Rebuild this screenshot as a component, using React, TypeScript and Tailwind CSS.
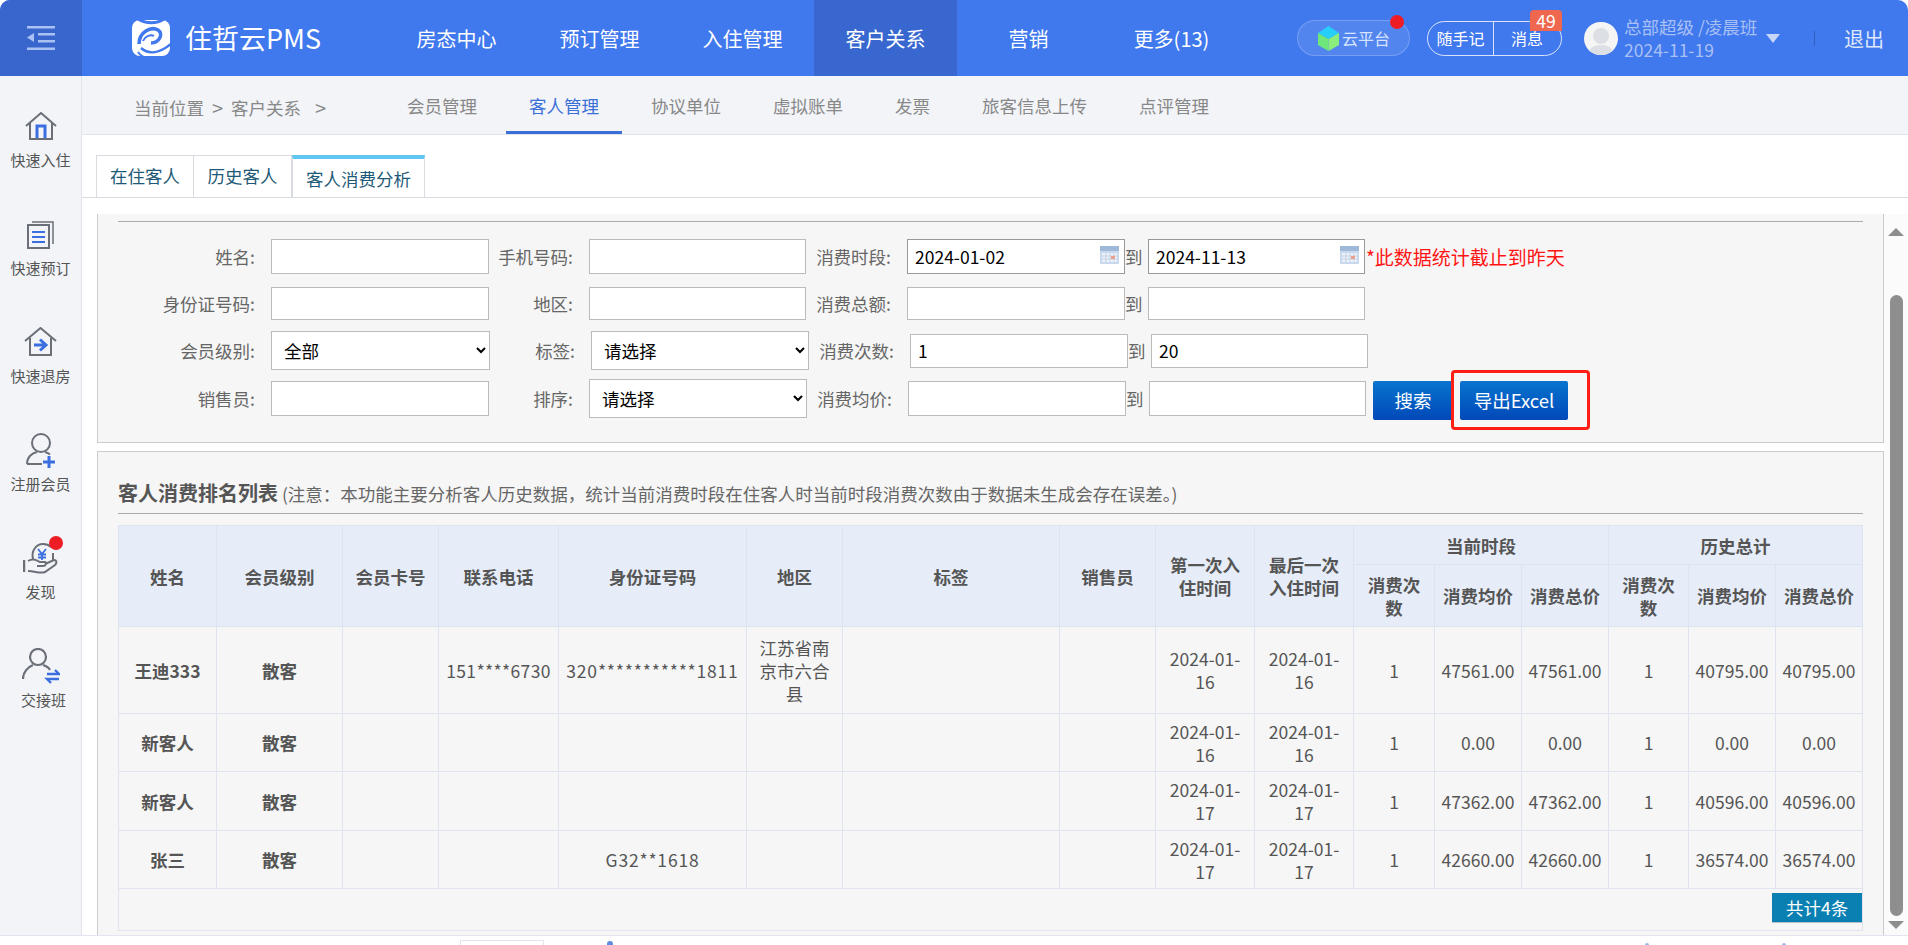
import type { ReactNode } from 'react'

const navItems = ['房态中心', '预订管理', '入住管理', '客户关系', '营销', '更多(13)']
const subNav = ['会员管理', '客人管理', '协议单位', '虚拟账单', '发票', '旅客信息上传', '点评管理']
const colWidths = ['w-[98px]', 'w-[126px]', 'w-[96px]', 'w-[120px]', 'w-[188px]', 'w-[96px]', 'w-[217px]', 'w-[96px]', 'w-[99px]', 'w-[99px]', 'w-[81px]', 'w-[87px]', 'w-[87px]', 'w-[80px]', 'w-[87px]', 'w-[87px]']

const rows = [
  { h: 'h-[87px]', name: '王迪333', phone: '151****6730', id: '320***********1811', area: '江苏省南京市六合县', first: '2024-01-16', last: '2024-01-16', cur: ['47561.00', '47561.00'], his: ['40795.00', '40795.00'] },
  { h: 'h-[58px]', name: '新客人', phone: '', id: '', area: '', first: '2024-01-16', last: '2024-01-16', cur: ['0.00', '0.00'], his: ['0.00', '0.00'] },
  { h: 'h-[59px]', name: '新客人', phone: '', id: '', area: '', first: '2024-01-17', last: '2024-01-17', cur: ['47362.00', '47362.00'], his: ['40596.00', '40596.00'] },
  { h: 'h-[58px]', name: '张三', phone: '', id: 'G32**1618', area: '', first: '2024-01-17', last: '2024-01-17', cur: ['42660.00', '42660.00'], his: ['36574.00', '36574.00'] },
]

const grey = '#6b7078'
const blue = '#3b6fe0'

const Logo = () => (
  <svg width="40" height="38" viewBox="0 0 40 38" fill="none">
    <rect x="1" y="1" width="38" height="36" rx="8" fill="#fff" />
    <path d="M7 0 C15 5 26 5 33 0" stroke="#4078ee" strokeWidth="3" />
    <path d="M8 25 C8 13 20 7 27 11 C33 15 28 24 20 24" stroke="#4078ee" strokeWidth="3.5" />
    <path d="M12 22 C14 17 20 15 23 17" stroke="#4078ee" strokeWidth="2" />
    <path d="M10 29 C18 36 29 34 40 25" stroke="#4078ee" strokeWidth="2.5" />
    <path d="M7 33 C11 39 18 40 24 39" stroke="#4078ee" strokeWidth="2" />
  </svg>
)

const HomeIcon = () => (
  <svg width="32" height="28" viewBox="0 0 32 28" fill="none" stroke={grey} strokeWidth="2">
    <path d="M1 14 L16 1 L31 14" />
    <path d="M5 11 V27 H27 V11" />
    <path d="M12 26 V14 H20 V26" stroke={blue} strokeWidth="3" />
  </svg>
)

const BookIcon = () => (
  <svg width="28" height="29" viewBox="0 0 28 29" fill="none" stroke={grey} strokeWidth="2">
    <rect x="1" y="5" width="21" height="23" />
    <path d="M5 2 H26 V24" strokeWidth="1.5" />
    <path d="M5 12 H18 M5 17 H18 M5 22 H18" stroke={blue} strokeWidth="2" />
  </svg>
)

const ExitIcon = () => (
  <svg width="33" height="30" viewBox="0 0 33 30" fill="none" stroke={grey} strokeWidth="2">
    <path d="M1 14 L16.5 1 L32 14" />
    <path d="M6 11 V28 H27 V11" />
    <path d="M10 18 H21 M16 12.5 L22 18 L16 23.5" stroke={blue} strokeWidth="3" />
  </svg>
)

const AddUserIcon = () => (
  <svg width="30" height="35" viewBox="0 0 30 35" fill="none" stroke={grey} strokeWidth="2">
    <circle cx="15" cy="10" r="9" />
    <path d="M1 31 C1 24 6 20 11 19 M19 19 C21 19.5 23 20.5 24 21.5 M1 31 H16" />
    <path d="M23 23 V35 M17 29 H29" stroke={blue} strokeWidth="3" />
  </svg>
)

const HandIcon = () => (
  <svg width="35" height="33" viewBox="0 0 35 33" fill="none" stroke={grey} strokeWidth="2">
    <path d="M10 17 C8 9 13 2 20 2 C23 2 26 3 28 5 M30 11 V19" />
    <path d="M1 18 V30" strokeWidth="2.5" />
    <path d="M5 19 C10 16 13 18 17 20 H22 C24 21 23 24 20 24 H14 M22 22 L31 18 C34 18 34 21 32 23 L22 30 C17 32 12 29 5 29" />
    <path d="M15 7 L19 12 L23 7 M19 12 V18 M15 12.5 H23 M15 15.5 H23" stroke={blue} strokeWidth="1.8" />
  </svg>
)

const SwapUserIcon = () => (
  <svg width="38" height="36" viewBox="0 0 38 36" fill="none" stroke={grey} strokeWidth="2.2">
    <circle cx="16" cy="9" r="8" />
    <path d="M1 31 C1 24 6 19 11 17 M21 17 C24 18 27 20 28 22" />
    <path d="M25 26 H37 L33 22 M37 31 H25 L29 35" stroke={blue} strokeWidth="2.4" />
  </svg>
)

const CalendarIcon = () => (
  <svg width="19" height="18" viewBox="0 0 19 18">
    <rect width="19" height="18" rx="1" fill="#c9d8ec" />
    <rect width="19" height="5" fill="#9db8d8" />
    <rect x="2" y="7" width="15" height="9" fill="#eef3fa" />
    <path d="M2 10 H17 M2 13 H17 M6 7 V16 M10 7 V16 M14 7 V16" stroke="#c3d0e2" strokeWidth="1" />
    <rect x="11" y="10" width="4" height="3" fill="#e9a08c" />
  </svg>
)

const inputCls = 'border border-[#bbb] bg-white px-[7px] text-black outline-none shrink-0'
const selectCls = 'h-[39px] shrink-0 border border-[#bbb] bg-white pl-[8px] text-black'
const btnCls = 'h-[39px] rounded-[2px] bg-gradient-to-b from-[#0b74cf] to-[#0448b8] text-[18.5px] text-white'

const Label = ({ w, children }: { w: string; children: ReactNode }) => (
  <span className={`${w} shrink-0 pr-[16px] text-right text-[#666]`}>{children}</span>
)

const To = () => <span className="w-[23px] shrink-0 text-[#666]">到</span>

const DateInput = ({ value, w }: { value: string; w: string }) => (
  <div className={`relative ${w} shrink-0`}>
    <input defaultValue={value} className="h-[35px] w-full border border-[#999] bg-white px-[7px] text-black outline-none" />
    <span className="absolute top-[7px] right-[6px] flex">
      <CalendarIcon />
    </span>
  </div>
)

const SideItem = ({ icon, label, dot, shift }: { icon: ReactNode; label: string; dot?: boolean; shift?: boolean }) => (
  <div className="flex h-[108px] flex-col items-center">
    <div className="relative mt-[6px] flex h-[40px] items-center justify-center">
      {icon}
      {dot && <span className="absolute top-[-2px] right-[-5px] h-[14px] w-[14px] rounded-full bg-[#ee1c25]" />}
    </div>
    <span className={`mt-[4px] text-[15px] leading-[20px] text-[#555] ${shift ? 'pl-[6px]' : ''}`}>{label}</span>
  </div>
)

const th = 'border border-[#dde4f1] bg-[#e6edf9] px-[6px] font-bold text-[#555]'
const td = 'border border-[#dfe4ee] px-[6px] text-center text-[#555]'
const tdTight = 'border border-[#dfe4ee] text-center text-[#555] whitespace-nowrap'

export default function App() {
  return (
    <div className="flex h-screen w-full flex-col overflow-hidden bg-white text-[17.5px] leading-[23px] [font-family:'Noto_Sans_CJK_SC',sans-serif]">
      {/* Header */}
      <header className="flex h-[76px] shrink-0 items-center rounded-t-[10px] bg-[#4078ee] text-white">
        <div className="flex h-full w-[82px] shrink-0 items-center justify-center rounded-tl-[10px] bg-[#3966cc]">
          <svg width="28" height="24" viewBox="0 0 28 24" fill="#a9c1f3">
            <rect x="0" y="0" width="28" height="2.5" />
            <rect x="11" y="7" width="17" height="2.5" />
            <rect x="11" y="14" width="17" height="2.5" />
            <rect x="0" y="21.5" width="28" height="2.5" />
            <path d="M0 11.5 L7 7 V16 Z" />
          </svg>
        </div>
        <div className="flex h-full w-[303px] shrink-0 items-center pl-[49px]">
          <Logo />
          <span className="ml-[14px] text-[27px] leading-[36px]">住哲云PMS</span>
        </div>
        <nav className="flex h-full shrink-0">
          {navItems.map((item) => (
            <div key={item} className={`flex h-full w-[143px] items-center justify-center text-[20px] ${item === '客户关系' ? 'bg-[#3868cf]' : ''}`}>
              {item}
            </div>
          ))}
        </nav>
        <div className="relative ml-[54px] flex h-[36px] w-[113px] shrink-0 items-center rounded-full border border-white/20 bg-white/10 pl-[20px]">
          <svg width="21" height="25" viewBox="0 0 21 25">
            <path d="M10.5 0 L21 7 L10.5 13 L0 7 Z" fill="#26cffa" />
            <path d="M0 7 L10.5 13 V25 L0 19 Z" fill="#6fe67a" />
            <path d="M21 7 L10.5 13 V25 L21 19 Z" fill="#8aee7e" />
          </svg>
          <span className="ml-[3px] text-[16px] text-[#d8e4ff]">云平台</span>
          <span className="absolute top-[-6px] right-[5px] h-[14px] w-[14px] rounded-full bg-[#ee1c25]" />
        </div>
        <div className="relative ml-[17px] flex h-[35px] w-[135px] shrink-0 items-center rounded-full border border-white/80 text-[16px]">
          <span className="flex h-full w-[66px] items-center justify-center border-r border-white/80">随手记</span>
          <span className="pl-[17px]">消息</span>
          <span className="absolute top-[-12px] right-[-1px] flex h-[21px] w-[32px] items-center justify-center rounded-t-[4px] bg-[#f0674f] text-[17.5px]">49</span>
        </div>
        <div className="ml-[22px] flex h-[33px] w-[34px] shrink-0 items-end justify-center overflow-hidden rounded-full bg-[#f5f5f5]">
          <svg width="26" height="28" viewBox="0 0 26 28" fill="#dcdfe3">
            <circle cx="13" cy="9" r="8" />
            <path d="M0 28 C1 20 7 18 13 18 C19 18 25 20 26 28 Z" />
          </svg>
        </div>
        <div className="ml-[6px] flex w-[133px] shrink-0 flex-col text-[#a9c0f5]">
          <span className="whitespace-nowrap">总部超级 /凌晨班</span>
          <span>2024-11-19</span>
        </div>
        <svg className="ml-[9px] shrink-0" width="14" height="9" viewBox="0 0 14 9" fill="#c8d6f8">
          <path d="M0 0 H14 L7 9 Z" />
        </svg>
        <span className="ml-[34px] h-[15px] w-px shrink-0 bg-[#345fbd]" />
        <span className="ml-[29px] text-[20px] text-[#dfe7fb]">退出</span>
      </header>

      <div className="flex min-h-0 flex-1">
        {/* Sidebar */}
        <aside className="w-[82px] shrink-0 border-r border-[#e2e4ea] bg-[#f2f4f8] pt-[24px]">
          <SideItem icon={<HomeIcon />} label="快速入住" />
          <SideItem icon={<BookIcon />} label="快速预订" />
          <SideItem icon={<ExitIcon />} label="快速退房" />
          <SideItem icon={<AddUserIcon />} label="注册会员" />
          <SideItem icon={<HandIcon />} label="发现" dot />
          <SideItem icon={<SwapUserIcon />} label="交接班" shift />
        </aside>

        <main className="flex min-w-0 flex-1 flex-col">
          {/* Sub navigation */}
          <div className="flex h-[59px] shrink-0 border-b border-[#e2e4e8] bg-[#f2f4f8]">
            <div className="flex w-[302px] shrink-0 items-center pt-[5px] pl-[52px] text-[#888]">
              当前位置
              <span className="mx-[8px] text-[20px]">&gt;</span>
              客户关系
              <span className="ml-[14px] text-[20px]">&gt;</span>
            </div>
            <div className="flex gap-[6px]">
              {subNav.map((item) => (
                <div
                  key={item}
                  className={`flex items-center border-b-[3px] px-[23px] pt-[3px] ${
                    item === '客人管理' ? 'border-[#3b6fd8] text-[#3b6fd8]' : 'border-transparent text-[#888]'
                  }`}
                >
                  {item}
                </div>
              ))}
            </div>
          </div>

          {/* Page tabs */}
          <div className="mt-[20px] flex h-[43px] shrink-0 border-b border-[#d8dce0] pl-[14px] text-[#1e5a78]">
            <div className="flex h-[43px] w-[98px] items-center justify-center border border-[#d8dce0] pb-[2px]">在住客人</div>
            <div className="flex h-[43px] w-[98px] items-center justify-center border-y border-r border-[#d8dce0] pb-[2px]">历史客人</div>
            <div className="flex h-[43px] w-[133px] items-center justify-center border-x border-b border-[#d8dce0] border-t-[4px] border-t-[#5fc6f2] bg-white">客人消费分析</div>
          </div>

          <div className="flex min-h-0 flex-1 pt-[16px]">
            <div className="min-w-0 flex-1 pl-[15px]">
              {/* Search form */}
              <section className="border-x border-b border-[#ccc] bg-[#f6f6f6] pt-[7px] pb-[24px] whitespace-nowrap">
                <div className="mx-[20px] mb-[15px] h-px bg-[#aaa]" />
                <div className="flex h-[39px] items-center">
                  <Label w="w-[173px]">姓名:</Label>
                  <input className={`${inputCls} h-[35px] w-[218px]`} />
                  <Label w="w-[100px]">手机号码:</Label>
                  <input className={`${inputCls} h-[35px] w-[217px]`} />
                  <Label w="w-[101px]">消费时段:</Label>
                  <DateInput value="2024-01-02" w="w-[218px]" />
                  <To />
                  <DateInput value="2024-11-13" w="w-[217px]" />
                  <span className="ml-[1px] text-[19px] text-[#ff1414]">*此数据统计截止到昨天</span>
                </div>
                <div className="mt-[8px] flex h-[39px] items-center">
                  <Label w="w-[173px]">身份证号码:</Label>
                  <input className={`${inputCls} h-[33px] w-[218px]`} />
                  <Label w="w-[100px]">地区:</Label>
                  <input className={`${inputCls} h-[33px] w-[217px]`} />
                  <Label w="w-[101px]">消费总额:</Label>
                  <input className={`${inputCls} h-[33px] w-[218px]`} />
                  <To />
                  <input className={`${inputCls} h-[33px] w-[217px]`} />
                </div>
                <div className="mt-[8px] flex h-[39px] items-center">
                  <Label w="w-[173px]">会员级别:</Label>
                  <select defaultValue="全部" className={`${selectCls} w-[219px]`}>
                    <option>全部</option>
                  </select>
                  <Label w="w-[101px]">标签:</Label>
                  <select defaultValue="请选择" className={`${selectCls} w-[218px]`}>
                    <option>请选择</option>
                  </select>
                  <Label w="w-[101px]">消费次数:</Label>
                  <input defaultValue="1" className={`${inputCls} h-[34px] w-[218px]`} />
                  <To />
                  <input defaultValue="20" className={`${inputCls} h-[34px] w-[217px]`} />
                </div>
                <div className="mt-[9px] flex h-[39px] items-center">
                  <Label w="w-[173px]">销售员:</Label>
                  <input className={`${inputCls} h-[35px] w-[218px]`} />
                  <Label w="w-[100px]">排序:</Label>
                  <select defaultValue="请选择" className={`${selectCls} w-[218px]`}>
                    <option>请选择</option>
                  </select>
                  <Label w="w-[101px]">消费均价:</Label>
                  <input className={`${inputCls} h-[35px] w-[218px]`} />
                  <To />
                  <input className={`${inputCls} h-[35px] w-[217px]`} />
                  <button className={`${btnCls} mt-[4px] ml-[7px] w-[80px] shrink-0`}>搜索</button>
                  <div className="relative mt-[4px] ml-[7px] shrink-0">
                    <button className={`${btnCls} w-[108px]`}>导出Excel</button>
                    <span className="absolute top-[-11px] right-[-22px] bottom-[-10px] left-[-9px] rounded-[4px] border-[3px] border-[#ff1f14]" />
                  </div>
                </div>
              </section>

              {/* Ranking list */}
              <section className="mt-[8px] h-[600px] border-x border-t border-[#ccc] bg-[#f6f6f6] px-[20px]">
                <div className="border-b border-[#aaa] pt-[29px] pb-[7px] leading-[24px] whitespace-nowrap text-[#666]">
                  <b className="text-[20px] text-[#555]">客人消费排名列表</b> (注意&#xFF1A;本功能主要分析客人历史数据&#xFF0C;统计当前消费时段在住客人时当前时段消费次数由于数据未生成会存在误差。)
                </div>
                <table className="mt-[11px] w-full table-fixed border-collapse">
                  <colgroup>
                    {colWidths.map((w, i) => (
                      <col key={i} className={w} />
                    ))}
                  </colgroup>
                  <thead>
                    <tr className="h-[39px]">
                      {['姓名', '会员级别', '会员卡号', '联系电话', '身份证号码', '地区', '标签', '销售员', '第一次入住时间', '最后一次入住时间'].map((h) => (
                        <th key={h} rowSpan={2} className={th}>{h}</th>
                      ))}
                      <th colSpan={3} className={th}>当前时段</th>
                      <th colSpan={3} className={th}>历史总计</th>
                    </tr>
                    <tr className="h-[62px]">
                      {['消费次数', '消费均价', '消费总价', '消费次数', '消费均价', '消费总价'].map((h, i) => (
                        <th key={i} className={th}>{h}</th>
                      ))}
                    </tr>
                  </thead>
                  <tbody>
                    {rows.map((r, i) => (
                      <tr key={i} className={r.h}>
                        <td className={`${td} font-bold`}>{r.name}</td>
                        <td className={`${td} font-bold`}>散客</td>
                        <td className={td}></td>
                        <td className={`${tdTight} tracking-[0.35px]`}>{r.phone}</td>
                        <td className={`${tdTight} tracking-[0.8px]`}>{r.id}</td>
                        <td className={td}>{r.area}</td>
                        <td className={td}></td>
                        <td className={td}></td>
                        <td className={td}>{r.first}</td>
                        <td className={td}>{r.last}</td>
                        <td className={td}>1</td>
                        <td className={tdTight}>{r.cur[0]}</td>
                        <td className={tdTight}>{r.cur[1]}</td>
                        <td className={td}>1</td>
                        <td className={tdTight}>{r.his[0]}</td>
                        <td className={tdTight}>{r.his[1]}</td>
                      </tr>
                    ))}
                    <tr className="h-[42px]">
                      <td colSpan={16} className="border border-[#dfe4ee] p-0 align-top">
                        <div className="flex justify-end pt-[4px]">
                          <span className="flex h-[30px] w-[90px] items-center justify-center border-b border-[#b5c0c8] bg-[#0a80b2] text-white">共计4条</span>
                        </div>
                      </td>
                    </tr>
                  </tbody>
                </table>
              </section>
            </div>

            {/* Scrollbar */}
            <div className="flex w-[24px] shrink-0 flex-col items-center bg-[#fbfbfb] pt-[14px] pb-[6px]">
              <span className="h-0 w-0 border-x-[8px] border-b-[8px] border-x-transparent border-b-[#8e8e8e]" />
              <span className="mt-[59px] h-[621px] w-[13px] rounded-full bg-[#8e8e8e]" />
              <span className="mt-auto h-0 w-0 border-x-[8px] border-t-[8px] border-x-transparent border-t-[#8e8e8e]" />
            </div>
          </div>
        </main>
      </div>

      {/* Next section peeking in */}
      <div className="flex h-[10px] shrink-0 border-t border-[#e4e4f0] bg-white pt-[4px] pl-[460px]">
        <span className="h-[20px] w-[84px] shrink-0 border border-[#e4e4f0]" />
        <span className="mt-[1px] ml-[63px] h-[8px] w-[6px] shrink-0 rounded-t-full bg-[#5f8be0]" />
        <span className="mt-[3px] ml-[1032px] h-[4px] w-[4px] shrink-0 rounded-full bg-[#9db8ea]" />
        <span className="mt-[3px] ml-[133px] h-[4px] w-[4px] shrink-0 rounded-full bg-[#9db8ea]" />
      </div>
    </div>
  )
}
